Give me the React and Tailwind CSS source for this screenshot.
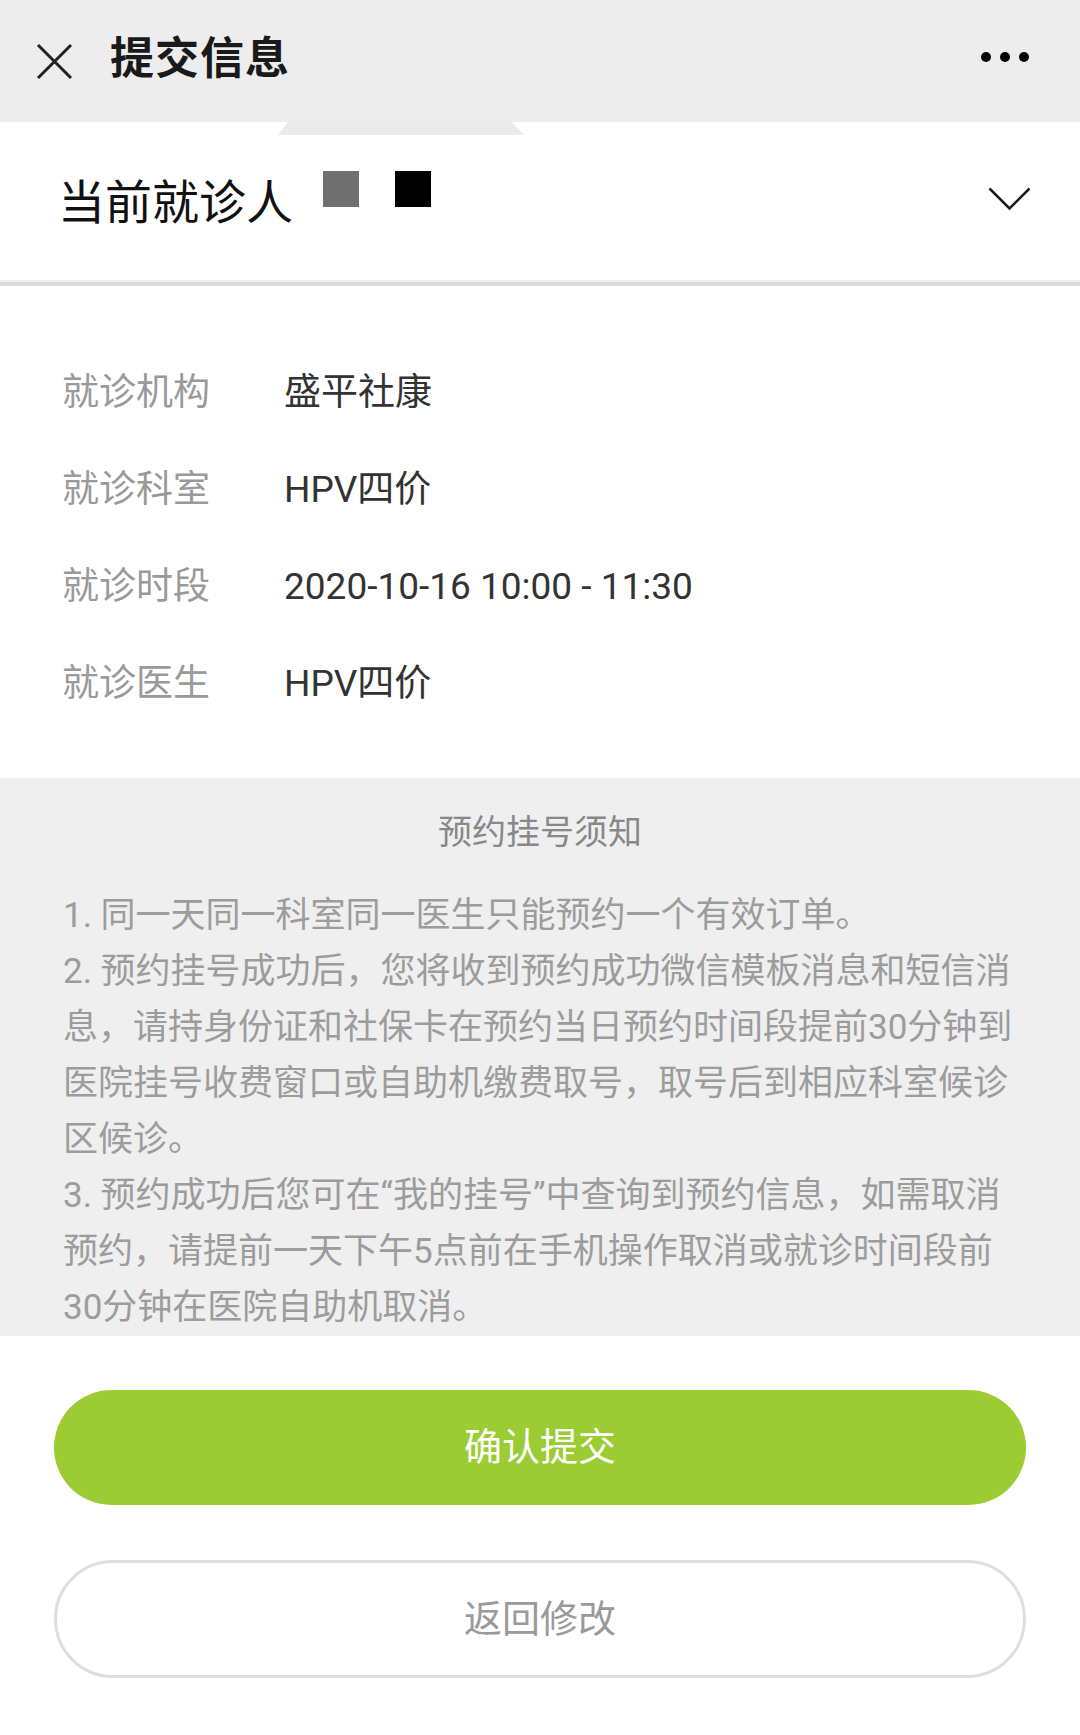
import React from 'react';

const FONT = "font-['Roboto','Noto_Sans_CJK_SC',sans-serif]";

const rows = [
  { label: '就诊机构', value: '盛平社康' },
  { label: '就诊科室', value: 'HPV四价' },
  { label: '就诊时段', value: '2020-10-16 10:00 - 11:30' },
  { label: '就诊医生', value: 'HPV四价' },
];

// wrapped the same way the phone wraps it
const notice = [
  '1. 同一天同一科室同一医生只能预约一个有效订单。',
  '2. 预约挂号成功后，您将收到预约成功微信模板消息和短信消',
  '息，请持身份证和社保卡在预约当日预约时间段提前30分钟到',
  '医院挂号收费窗口或自助机缴费取号，取号后到相应科室候诊',
  '区候诊。',
  '3. 预约成功后您可在“我的挂号”中查询到预约信息，如需取消',
  '预约，请提前一天下午5点前在手机操作取消或就诊时间段前',
  '30分钟在医院自助机取消。',
];

const Header = () => (
  <div className="relative h-[122px] bg-[#ededed] flex items-center pl-[36px] pr-[51px]">
    <svg width="37" height="37" viewBox="0 0 37 37" className="shrink-0">
      <path d="M2 2 L35 35 M35 2 L2 35" stroke="#222" strokeWidth="3" fill="none" />
    </svg>
    <h1 className="ml-[37px] text-[44px] leading-none font-bold text-[#1a1a1a] tracking-[1px] mt-[-4px]">提交信息</h1>
    <div className="ml-auto flex items-center gap-[9px] mt-[-8px]">
      <span className="w-[10px] h-[10px] rounded-full bg-black" />
      <span className="w-[10px] h-[10px] rounded-full bg-black" />
      <span className="w-[10px] h-[10px] rounded-full bg-black" />
    </div>
    {/* little tab under the title bar */}
    <svg width="246" height="13" viewBox="0 0 246 13" className="absolute left-[278px] top-[122px]">
      <polygon points="10,0 234,0 246,13 0,13" fill="#ebebeb" />
    </svg>
  </div>
);

const PatientRow = () => (
  <div className="h-[158px] bg-white flex items-center pl-[58px] pr-[49px]">
    <span className="text-[47px] leading-none text-[#111] mt-[2px]">当前就诊人</span>
    <div className="flex items-center gap-[36px] ml-[30px] mb-[24px]">
      <span className="w-[36px] h-[36px] bg-[#707070]" />
      <span className="w-[36px] h-[36px] bg-black" />
    </div>
    <svg width="43" height="24" viewBox="0 0 43 24" className="ml-auto mt-[-4px]">
      <path d="M1.5 1.5 L21.5 21.5 L41.5 1.5" stroke="#1a1a1a" strokeWidth="2.5" fill="none" />
    </svg>
  </div>
);

const InfoList = () => (
  <div className="bg-white pt-[58px] pb-[46px] px-[62px]">
    {rows.map((r) => (
      <div key={r.label} className="h-[97px] flex items-center text-[37px] leading-none">
        <span className="w-[222px] text-[#9a9a9a]">{r.label}</span>
        <span className="text-[#333]">{r.value}</span>
      </div>
    ))}
  </div>
);

const Notice = () => (
  <div className="bg-[#efefef] pt-[26px] px-[63px]">
    <div className="h-[56px] flex items-center justify-center text-[34px] text-[#888]">预约挂号须知</div>
    <div className="mt-[28px] text-[35px] leading-[56px] text-[#9c9c9c]">
      {notice.map((line, i) => (
        <div key={i} className="whitespace-nowrap">{line}</div>
      ))}
    </div>
  </div>
);

export default function App() {
  return (
    <div className={`w-[1080px] h-[1735px] bg-white ${FONT} overflow-hidden`}>
      <Header />
      <PatientRow />
      <div className="h-[2px] bg-[#efefef]" />
      <div className="h-[4px] bg-[#dcdcdc]" />
      <InfoList />
      <Notice />

      <div className="px-[54px] pt-[54px] flex flex-col gap-[55px]">
        <button className="h-[115px] rounded-full bg-[#9bcc34] text-white text-[38px] flex items-center justify-center">
          确认提交
        </button>
        <button className="h-[118px] rounded-full border-[3px] border-[#dedede] bg-white text-[#9a9a9a] text-[38px] flex items-center justify-center">
          返回修改
        </button>
      </div>
    </div>
  );
}
